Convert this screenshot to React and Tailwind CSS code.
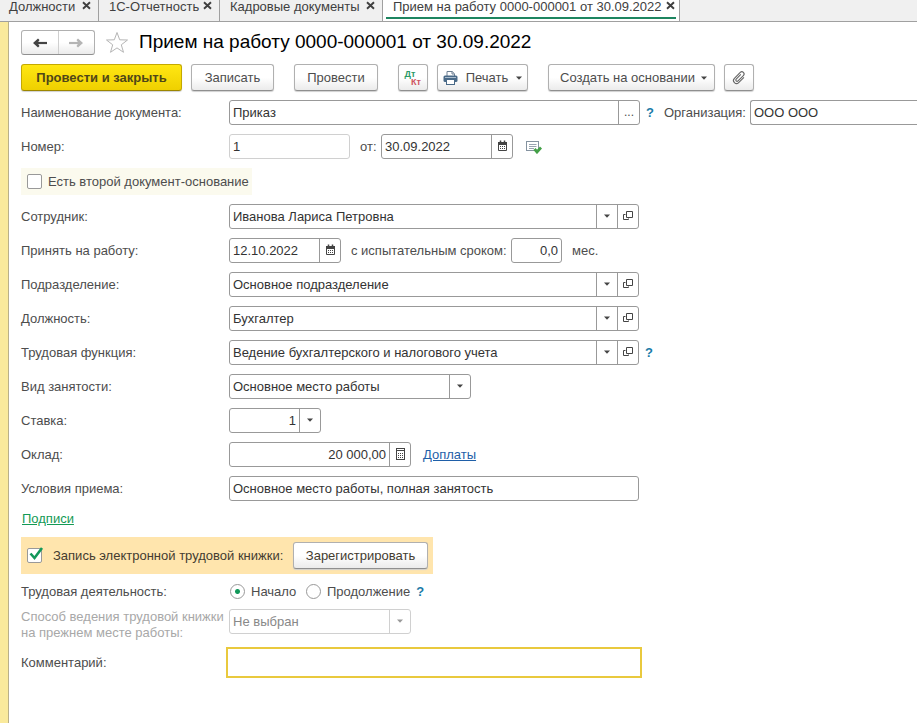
import React, { useState } from "react";

function CloseIcon() {
  return (
    <svg width="9" height="9" viewBox="0 0 9 9" aria-hidden="true">
      <path d="M1 1.2 L8 7.8 M8 1.2 L1 7.8" stroke="#3f3f3f" strokeWidth="1.9" fill="none" />
    </svg>
  );
}

function CalendarIcon() {
  return (
    <svg width="11" height="12" viewBox="0 0 11 12" aria-hidden="true">
      <path d="M1.500 2.500h8v8h-8z" fill="#fff" stroke="#444" />
      <rect x="1" y="2" width="9" height="3" fill="#444" />
      <path d="M3.500 0.500v2M7.500 0.500v2" stroke="#444" strokeWidth="1.500" />
      <path d="M3 6.500h5M3 8.500h5" stroke="#444" strokeDasharray="1 1" />
    </svg>
  );
}

function CalculatorIcon() {
  return (
    <svg width="11" height="12" viewBox="0 0 11 12" aria-hidden="true">
      <rect x="1.500" y="0.5" width="8" height="11" fill="#fff" stroke="#444" />
      <path d="M2 2.500h7" stroke="#444" />
      <path d="M3 5.500h5M3 7.500h5M3 9.500h5" stroke="#444" strokeDasharray="1 1" />
    </svg>
  );
}

function OpenIcon() {
  return (
    <svg width="10" height="10" viewBox="0 0 10 10" aria-hidden="true">
      <path d="M3.5 0.5h6v6h-6z" fill="none" stroke="#444" />
      <path d="M2.5 3.5h-2v5h5v-1" fill="none" stroke="#444" />
    </svg>
  );
}

function ArrowDown({ pale }) {
  return (
    <svg width="6" height="4" viewBox="0 0 6 4" aria-hidden="true">
      <path d="M0 0.5h6L3 3.8z" fill={pale ? "#999" : "#444"} />
    </svg>
  );
}

function PrinterIcon() {
  return (
    <svg width="15" height="14" viewBox="0 0 15 14" aria-hidden="true">
      <path d="M4 5V0.5h5.2L11.5 2.8V5" fill="#fff" stroke="#6c7f92" />
      <path d="M9 0.5v2.5h2.5" fill="none" stroke="#6c7f92" />
      <rect x="0.5" y="4.5" width="14" height="6.5" rx="1.5" fill="#4a6a88" />
      <rect x="2" y="6" width="11" height="1" fill="#a9bccd" />
      <rect x="3.5" y="8.5" width="8" height="5" fill="#fff" stroke="#4a6a88" />
    </svg>
  );
}

function ClipIcon() {
  return (
    <svg width="16" height="16" viewBox="0 0 16 16" aria-hidden="true">
      <g transform="rotate(45 8 8)" fill="none" stroke="#666" strokeWidth="1.1">
        <path d="M11 4v7.500a3 3 0 0 1-6 0V3.200a2.200 2.200 0 0 1 4.400 0v7.600a1.300 1.300 0 0 1-2.600 0V4.200" />
      </g>
    </svg>
  );
}

function PostedIcon() {
  return (
    <svg width="16" height="14" viewBox="0 0 16 14" aria-hidden="true">
      <rect x="0.5" y="1.500" width="12" height="9" fill="#fff" stroke="#8593a0" />
      <path d="M3 4.500h7.500M3 6.500h7.500M3 8.500h5" stroke="#98a4b0" />
      <path d="M8.500 9l2.500 3L15 7.500" fill="none" stroke="#43a047" strokeWidth="2.800" />
    </svg>
  );
}

function Tab({ children, className }) {
  return (
    <div className={"flex shrink-0 items-start justify-between border-r border-[#a0a0a0] pr-[7px] " + className}>
      <button type="button" className="whitespace-nowrap leading-[14px]">{children}</button>
      <button type="button" aria-label="Закрыть" className="mt-px h-[9px]"><CloseIcon /></button>
    </div>
  );
}

function Button({ children, className = "", ...rest }) {
  return (
    <button
      type="button"
      className={"flex h-[27px] shrink-0 items-center justify-center whitespace-nowrap rounded-[3px] border border-[#b0b0b0] border-b-[#8f8f8f] bg-linear-to-b from-white from-50% to-[#ebebeb] shadow-[0_1px_1px_#d0d0d0] " + className}
      {...rest}
    >
      {children}
    </button>
  );
}

function Field({ id, value, width, right, actions = [], muted }) {
  const [text, setText] = useState(value);
  return (
    <div className={"flex h-[25px] shrink-0 rounded-[3px] border bg-white " + (muted ? "border-[#d0d0d0] " : "border-[#999] ") + width}>
      <input
        id={id}
        value={text}
        readOnly={muted}
        onChange={(e) => setText(e.target.value)}
        className={"w-0 min-w-0 grow bg-transparent px-[3px] text-[#333] outline-none " + (right ? "text-right" : "")}
      />
      {actions.map(([name, icon]) => (
        <button key={name} type="button" aria-label={name} className="flex w-[21px] shrink-0 items-center justify-center border-l border-[#999] pb-px">
          {icon}
        </button>
      ))}
    </div>
  );
}

function Select({ id, value, width, disabled }) {
  return (
    <div className={"relative flex h-[25px] shrink-0 rounded-[3px] border bg-white " + (disabled ? "border-[#d0d0d0] " : "border-[#999] ") + width}>
      <select
        id={id}
        disabled={disabled}
        className={"w-full appearance-none bg-transparent pl-[3px] pr-6 opacity-100 outline-none " + (disabled ? "text-[#888]" : "text-[#333]")}
      >
        <option>{value}</option>
      </select>
      <span className={"pointer-events-none absolute inset-y-0 right-0 flex w-[21px] items-center justify-center border-l pb-px " + (disabled ? "border-[#d0d0d0]" : "border-[#999]")}>
        <ArrowDown pale={disabled} />
      </span>
    </div>
  );
}

function Row({ id, label, children }) {
  return (
    <div className="flex items-center">
      <label htmlFor={id} className="w-52 shrink-0 whitespace-nowrap">{label}</label>
      {children}
    </div>
  );
}

function Help({ className }) {
  return <button type="button" aria-label="Справка" className={"font-bold text-[#1a7ba8] " + className}>?</button>;
}

const dropDown = ["Выбрать", <ArrowDown />];
const open = ["Открыть", <OpenIcon />];
const calendar = ["Календарь", <CalendarIcon />];

export default function App() {
  return (
    <div className="flex min-h-screen flex-col overflow-x-hidden bg-white font-['Liberation_Sans',Arial,sans-serif] text-[13px] text-[#4d4d4d]">
      <nav className="flex h-[22px] shrink-0 border-b border-[#a0a0a0] bg-[#f0f0f0] text-[#404040]">
        <Tab className="w-[99px] pl-[9px]">Должности</Tab>
        <Tab className="w-[121px] pl-[10px]">1С-Отчетность</Tab>
        <Tab className="w-[163px] pl-[10px]">Кадровые документы</Tab>
        <div className="flex h-[21px] shrink-0 border-r border-[#a0a0a0] bg-white px-[3px]">
          <div className="flex h-[19px] w-[290px] items-start justify-between border-b-2 border-[#1d8560] pl-[7px] pr-px">
            <button type="button" className="whitespace-nowrap leading-[14px]">Прием на работу 0000-000001 от 30.09.2022</button>
            <button type="button" aria-label="Закрыть" className="mt-px h-[9px]"><CloseIcon /></button>
          </div>
        </div>
      </nav>

      <div className="flex grow">
        <div className="w-[9px] shrink-0 border-r border-[#b9b08a] bg-[#faea9c]" />
        <main className="min-w-0 grow pl-3 pt-2">
          <header className="flex h-[25px] items-center">
            <div className="flex h-[25px] w-[74px] rounded-[3px] border border-[#b0b0b0] border-b-[#8f8f8f] bg-linear-to-b from-white from-50% to-[#ebebeb]">
              <button type="button" aria-label="Назад" className="flex flex-1 items-center justify-center border-r border-[#cfcfcf]">
                <svg width="14" height="10" viewBox="0 0 14 10"><path d="M14 5H4" fill="none" stroke="#444" strokeWidth="2.200" /><path d="M0 5L5 0.500L6.500 2L4.500 5L6.500 8L5 9.500z" fill="#444" /></svg>
              </button>
              <button type="button" aria-label="Вперед" className="flex flex-1 items-center justify-center">
                <svg width="14" height="10" viewBox="0 0 14 10"><path d="M0 5h10" fill="none" stroke="#b5b5b5" strokeWidth="2.200" /><path d="M14 5L9 0.500L7.500 2L9.500 5L7.500 8L9 9.500z" fill="#b5b5b5" /></svg>
              </button>
            </div>
            <button type="button" aria-label="В избранное" className="ml-[10px]">
              <svg width="24" height="23" viewBox="0 0 24 23"><path d="M12 1.500l2.700 7.300 7.800.2-6.200 4.800 2.200 7.500L12 16.900l-6.500 4.400 2.200-7.500L1.500 9l7.800-.2z" fill="#fff" stroke="#b5b5b5" /></svg>
            </button>
            <h1 className="ml-[10px] whitespace-nowrap text-[19px] text-black">Прием на работу 0000-000001 от 30.09.2022</h1>
          </header>

          <div className="mt-[9px] flex">
            <button type="button" className="h-[27px] w-[161px] shrink-0 whitespace-nowrap rounded-[3px] border border-[#c4a900] border-b-[#9c8600] bg-linear-to-b from-[#ffe712] to-[#efd000] font-bold text-[#4f4618] shadow-[0_1px_1px_#d0d0d0]">Провести и закрыть</button>
            <Button className="ml-[9px] w-[83px]">Записать</Button>
            <Button className="ml-5 w-[84px]">Провести</Button>
            <Button className="ml-5 w-[30px] flex-col text-[9px] leading-[8px]">
              <span className="mr-[6px] font-bold text-[#2c9a68]">Дт</span>
              <span className="ml-[6px] font-bold text-[#cf5560]">Кт</span>
            </Button>
            <Button className="ml-[9px] w-[91px]">
              <PrinterIcon /><span className="mx-2">Печать</span><ArrowDown />
            </Button>
            <Button className="ml-5 w-[167px] pl-1">
              <span className="mr-[6px]">Создать на основании</span><ArrowDown />
            </Button>
            <Button className="ml-[9px] w-[30px]" aria-label="Файлы"><ClipIcon /></Button>
          </div>

          <form className="mt-[9px] flex flex-col gap-[9px]">
            <Row id="name" label="Наименование документа:">
              <Field id="name" value="Приказ" width="w-[411px]" actions={[["Выбрать", <span className="text-[12px]">...</span>]]} />
              <Help className="ml-[6px]" />
              <label htmlFor="org" className="ml-[10px] w-[86px] shrink-0">Организация:</label>
              <input id="org" defaultValue="ООО ООО" className="h-[25px] w-0 min-w-0 grow rounded-l-[3px] border border-r-0 border-[#999] px-[3px] text-[#333] outline-none" />
            </Row>
            <Row id="number" label="Номер:">
              <Field id="number" value="1" width="w-[121px]" muted />
              <label htmlFor="date" className="ml-[10px] w-[21px]">от:</label>
              <Field id="date" value="30.09.2022" width="w-[132px]" actions={[calendar]} />
              <span className="ml-[13px]"><PostedIcon /></span>
            </Row>
            <label className="flex h-[27px] w-[231px] items-center whitespace-nowrap bg-[#fbfaee] pl-[6px]">
              <input type="checkbox" className="mr-[6px] size-[15px] shrink-0 appearance-none rounded-[2px] border border-[#999] bg-white" />
              Есть второй документ-основание
            </label>
            <Row id="employee" label="Сотрудник:">
              <Field id="employee" value="Иванова Лариса Петровна" width="w-[410px]" actions={[dropDown, open]} />
            </Row>
            <Row id="start" label="Принять на работу:">
              <Field id="start" value="12.10.2022" width="w-[112px]" actions={[calendar]} />
              <label htmlFor="trial" className="ml-[10px] w-40 whitespace-nowrap">с испытательным сроком:</label>
              <Field id="trial" value="0,0" width="w-[51px]" right />
              <span className="ml-[10px]">мес.</span>
            </Row>
            <Row id="department" label="Подразделение:">
              <Field id="department" value="Основное подразделение" width="w-[410px]" actions={[dropDown, open]} />
            </Row>
            <Row id="position" label="Должность:">
              <Field id="position" value="Бухгалтер" width="w-[410px]" actions={[dropDown, open]} />
            </Row>
            <Row id="function" label="Трудовая функция:">
              <Field id="function" value="Ведение бухгалтерского и налогового учета" width="w-[410px]" actions={[dropDown, open]} />
              <Help className="ml-[6px]" />
            </Row>
            <Row id="kind" label="Вид занятости:">
              <Select id="kind" value="Основное место работы" width="w-[242px]" />
            </Row>
            <Row id="rate" label="Ставка:">
              <Field id="rate" value="1" width="w-[92px]" right actions={[dropDown]} />
            </Row>
            <Row id="salary" label="Оклад:">
              <Field id="salary" value="20 000,00" width="w-[182px]" right actions={[["Калькулятор", <CalculatorIcon />]]} />
              <a href="#extra" className="ml-3 text-[#1f5fa8] underline">Доплаты</a>
            </Row>
            <Row id="terms" label="Условия приема:">
              <Field id="terms" value="Основное место работы, полная занятость" width="w-[410px]" />
            </Row>
            <div className="h-[18px] pl-px leading-[18px]">
              <a href="#signatures" className="text-[#149a55] underline">Подписи</a>
            </div>
            <div className="flex h-[37px] w-[412px] items-center bg-[#ffe5ad] pl-[6px] text-[#443c30]">
              <span className="relative mr-[11px] flex">
                <input id="record" type="checkbox" defaultChecked className="peer size-[15px] appearance-none rounded-[2px] border border-[#999] bg-white" />
                <svg className="pointer-events-none absolute -top-px left-[2px] hidden peer-checked:block" width="15" height="14" viewBox="0 0 15 14">
                  <path d="M1.500 6.500l4 4.500L13 1" fill="none" stroke="#12985a" strokeWidth="2.600" />
                </svg>
              </span>
              <label htmlFor="record" className="w-60 whitespace-nowrap">Запись электронной трудовой книжки:</label>
              <Button className="w-[135px]">Зарегистрировать</Button>
            </div>
            <div role="radiogroup" aria-label="Трудовая деятельность" className="flex h-[17px] items-center">
              <span className="w-52 shrink-0">Трудовая деятельность:</span>
              <label className="flex w-[77px] items-center">
                <input type="radio" name="activity" defaultChecked className="ml-px mr-[6px] size-[15px] appearance-none rounded-full border border-[#999] bg-white checked:bg-[radial-gradient(circle,#12985a_2px,#fff_3px)]" />
                Начало
              </label>
              <label className="flex items-center">
                <input type="radio" name="activity" className="mr-[6px] size-[15px] appearance-none rounded-full border border-[#999] bg-white checked:bg-[radial-gradient(circle,#12985a_2px,#fff_3px)]" />
                Продолжение
              </label>
              <Help className="ml-[6px]" />
            </div>
            <div className="flex items-start">
              <label htmlFor="method" className="w-52 shrink-0 whitespace-nowrap leading-4 text-[#a8a8a8]">
                Способ ведения трудовой книжки<br />на прежнем месте работы:
              </label>
              <Select id="method" value="Не выбран" width="w-[182px]" disabled />
            </div>
            <Row id="comment" label="Комментарий:">
              <input id="comment" className="h-[25px] w-[410px] px-[3px] text-[#333] outline-2 outline-offset-1 outline-[#e9c93e]" />
            </Row>
          </form>
        </main>
      </div>
    </div>
  );
}
